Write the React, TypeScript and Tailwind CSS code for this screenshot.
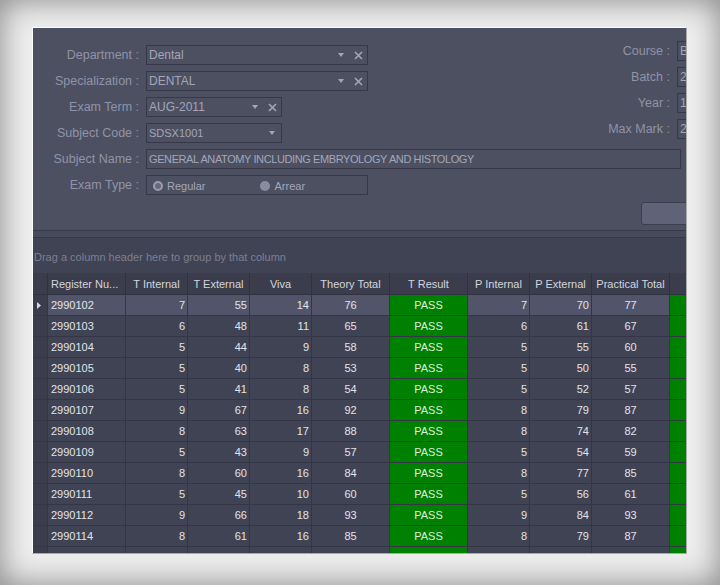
import clsx from 'clsx';

type Align = 'left' | 'right' | 'center';

const COLUMNS: { title: string; w: string; align: Align }[] = [
  { title: 'Register Nu...', w: 'w-[78px]', align: 'left' },
  { title: 'T Internal', w: 'w-[62px]', align: 'right' },
  { title: 'T External', w: 'w-[62px]', align: 'right' },
  { title: 'Viva', w: 'w-[62px]', align: 'right' },
  { title: 'Theory Total', w: 'w-[78px]', align: 'center' },
  { title: 'T Result', w: 'w-[78px]', align: 'center' },
  { title: 'P Internal', w: 'w-[62px]', align: 'right' },
  { title: 'P External', w: 'w-[62px]', align: 'right' },
  { title: 'Practical Total', w: 'w-[78px]', align: 'center' },
];

// reg, t internal, t external, viva, theory total, p internal, p external, practical total
const ROWS: [string, number, number, number, number, number, number, number][] = [
  ['2990102', 7, 55, 14, 76, 7, 70, 77],
  ['2990103', 6, 48, 11, 65, 6, 61, 67],
  ['2990104', 5, 44, 9, 58, 5, 55, 60],
  ['2990105', 5, 40, 8, 53, 5, 50, 55],
  ['2990106', 5, 41, 8, 54, 5, 52, 57],
  ['2990107', 9, 67, 16, 92, 8, 79, 87],
  ['2990108', 8, 63, 17, 88, 8, 74, 82],
  ['2990109', 5, 43, 9, 57, 5, 54, 59],
  ['2990110', 8, 60, 16, 84, 8, 77, 85],
  ['2990111', 5, 45, 10, 60, 5, 56, 61],
  ['2990112', 9, 66, 18, 93, 9, 84, 93],
  ['2990114', 8, 61, 16, 85, 8, 79, 87],
  ['2990115', 7, 57, 14, 78, 7, 73, 80],
];

const ALIGN: Record<Align, string> = {
  left: 'justify-start pl-[3px]',
  right: 'justify-end pr-[2px]',
  center: 'justify-center',
};

function Arrow() {
  return (
    <svg width="6" height="4" viewBox="0 0 6 4" className="shrink-0">
      <polygon points="0,0 6,0 3,4" fill="#a3a6b8" />
    </svg>
  );
}

function Cross() {
  return (
    <svg width="9" height="9" viewBox="0 0 9 9" className="shrink-0">
      <path d="M1 1 L8 8 M8 1 L1 8" stroke="#a3a6b8" strokeWidth="1.6" />
    </svg>
  );
}

function Label({ text, w }: { text: string; w: string }) {
  return <span className={clsx('text-right pr-[1px] text-[12.5px] text-[#8f93a8] whitespace-nowrap', w)}>{text} :</span>;
}

function Field({
  label,
  value,
  w,
  arrow,
  clear,
  valueClass = 'text-[12px]',
}: {
  label: string;
  value: string;
  w: string;
  arrow?: boolean;
  clear?: boolean;
  valueClass?: string;
}) {
  return (
    <div className="flex items-center h-[20px]">
      <Label text={label} w="w-[107px]" />
      <div className={clsx('ml-[6px] h-[20px] border border-[#363849] flex items-center pl-[2px] text-[#a3a6b9]', w)}>
        <span className={clsx('flex-1 truncate', valueClass)}>{value}</span>
        {arrow && (
          <span className={clsx('flex items-center', clear ? 'mr-[10px]' : 'mr-[6px]')}>
            <Arrow />
          </span>
        )}
        {clear && (
          <span className="flex items-center mr-[4px]">
            <Cross />
          </span>
        )}
      </div>
    </div>
  );
}

function SideField({ label, value }: { label: string; value: string }) {
  return (
    <div className="flex items-center h-[20px]">
      <Label text={label} w="w-[80px]" />
      <div className="ml-[6px] w-[76px] h-[20px] border border-[#363849] flex items-center pl-[2px] text-[12px] text-[#a3a6b9]">
        {value}
      </div>
    </div>
  );
}

export default function App() {
  return (
    <div className="w-[720px] h-[585px] bg-[#efefef] shadow-[inset_0_0_32px_rgba(0,0,0,0.45)] pl-[32px] pt-[27px] font-['Liberation_Sans',Arial,sans-serif] text-[11px] leading-none">
      <div className="w-[655px] h-[527px] border border-t-[#fbfbfb] border-l-[#fbfbfb] border-r-[#a9a9a9] border-b-[#a9a9a9] overflow-hidden bg-[#404353]">
        {/* ── Filter form ── */}
        <div className="w-[720px] h-[203px] bg-[#4d5061] border-b border-[#393b4a]">
          <div className="flex pt-[13px]">
            <div className="flex flex-col gap-[6px] pt-[4px]">
              <Field label="Department" value="Dental" w="w-[222px]" arrow clear />
              <Field label="Specialization" value="DENTAL" w="w-[222px]" arrow clear />
              <Field label="Exam Term" value="AUG-2011" w="w-[136px]" arrow clear />
              <Field label="Subject Code" value="SDSX1001" w="w-[136px]" arrow valueClass="text-[11px]" />
            </div>
            <div className="ml-auto flex flex-col gap-[6px]">
              <SideField label="Course" value="BDS" />
              <SideField label="Batch" value="2011" />
              <SideField label="Year" value="1" />
              <SideField label="Max Mark" value="200" />
            </div>
          </div>
          <div className="mt-[6px]">
            <Field
              label="Subject Name"
              value="GENERAL ANATOMY INCLUDING EMBRYOLOGY AND HISTOLOGY"
              w="w-[535px]"
              valueClass="text-[11px] tracking-[-0.4px]"
            />
          </div>
          <div className="mt-[6px] flex items-center h-[20px]">
            <Label text="Exam Type" w="w-[107px]" />
            <div className="ml-[6px] w-[222px] h-[20px] border border-[#363849] flex items-center pl-[6px] pt-[2px] text-[#a3a6b9]">
              <span className="w-[10px] h-[10px] rounded-full border-2 border-[#9a9db0] bg-[#66697c]" />
              <span className="ml-[4px]">Regular</span>
              <span className="ml-[54px] w-[10px] h-[10px] rounded-full bg-[#898c9f]" />
              <span className="ml-[5px]">Arrear</span>
            </div>
          </div>
          <div className="mt-[7px] ml-[608px] w-[90px] h-[23px] rounded-[3px] bg-[#606377] border border-[#3c3e4e]" />
        </div>
        <div className="h-[7px] bg-[#474a5a] border-b border-[#363848]" />

        {/* ── Group panel ── */}
        <div className="h-[35px] flex items-center pt-[4px] pl-[1px] text-[#7c7f94] bg-[#404353]">
          Drag a column header here to group by that column
        </div>

        {/* ── Grid ── */}
        <div className="flex h-[22px] bg-[#3b3d4d] border-b border-[#30323f] text-[#d3d5df]">
          <div className="w-[15px] shrink-0 border-r border-[#30323f]" />
          {COLUMNS.map((c) => (
            <div
              key={c.title}
              className={clsx(
                'shrink-0 border-r border-[#30323f] flex items-center pt-[2px] whitespace-nowrap overflow-hidden',
                c.w,
                c.align === 'left' ? 'justify-start pl-[3px]' : 'justify-center',
              )}
            >
              {c.title}
            </div>
          ))}
          <div className="flex-1" />
        </div>
        {ROWS.map((r, i) => {
          const sel = i === 0;
          const cells: (string | number)[] = [r[0], r[1], r[2], r[3], r[4], 'PASS', r[5], r[6], r[7]];
          return (
            <div key={r[0]} className="flex h-[21px] border-b border-[#343646] text-[#e2e3ea]">
              <div className="w-[15px] shrink-0 border-r border-[#343646] bg-[#3b3d4d] flex items-center pl-[4px]">
                {sel && (
                  <svg width="4" height="7" viewBox="0 0 4 7">
                    <polygon points="0,0 4,3.5 0,7" fill="#d8d9e0" />
                  </svg>
                )}
              </div>
              {cells.map((v, j) => {
                const col = COLUMNS[j];
                const pass = j === 5;
                return (
                  <div
                    key={j}
                    className={clsx(
                      'shrink-0 border-r border-[#343646] flex items-center pt-[1px]',
                      col.w,
                      ALIGN[col.align],
                      pass ? 'bg-[#008000] text-[#dcefdc]' : sel ? 'bg-[#52556a]' : 'bg-[#404354]',
                    )}
                  >
                    {v}
                  </div>
                );
              })}
              <div className="flex-1 bg-[#008000]" />
            </div>
          );
        })}
      </div>
    </div>
  );
}
